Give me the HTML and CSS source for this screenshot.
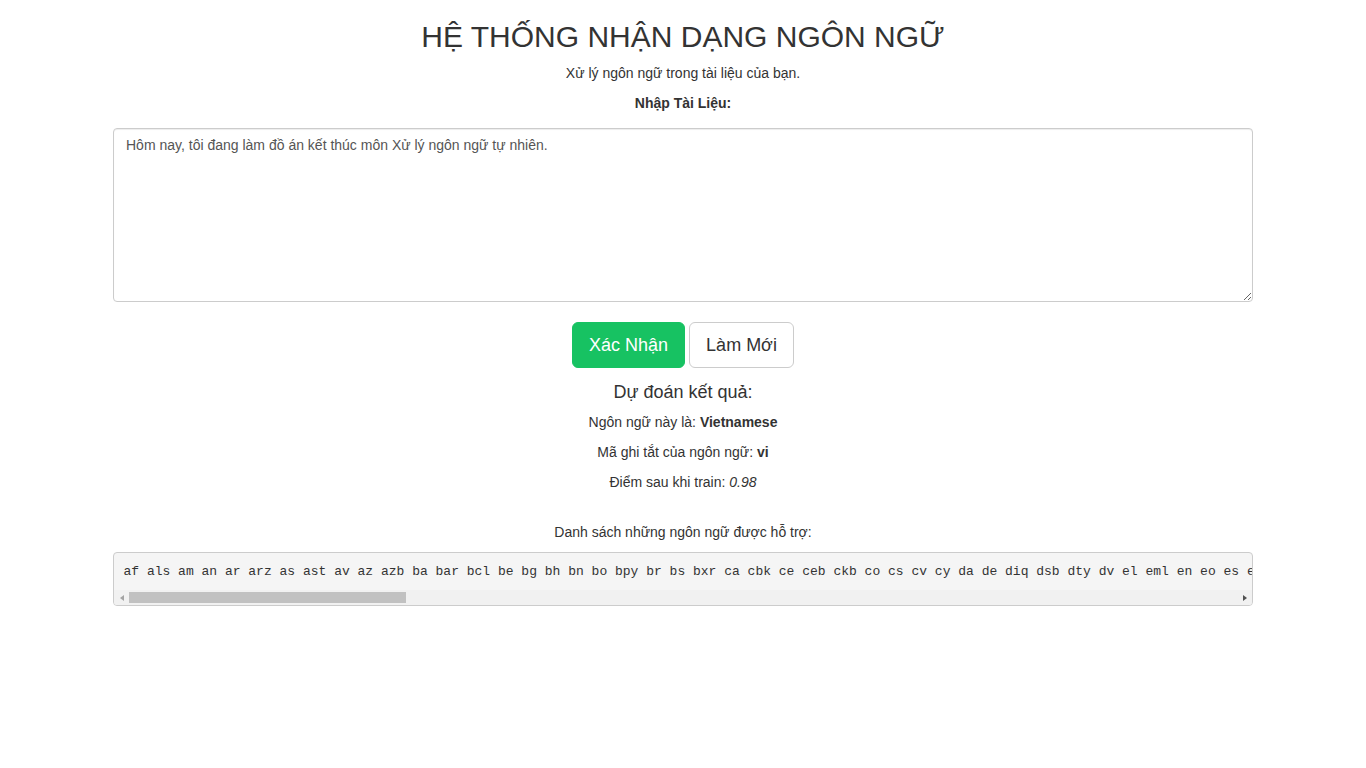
FILE: index.html
```html
<!DOCTYPE html>
<html lang="vi">
<head>
<meta charset="utf-8">
<title>Hệ thống nhận dạng ngôn ngữ</title>
<link rel="stylesheet" href="styles.css">
</head>
<body>
<div class="container">
  <h2 class="title">HỆ THỐNG NHẬN DẠNG NGÔN NGỮ</h2>
  <p class="center">Xử lý ngôn ngữ trong tài liệu của bạn.</p>
  <form class="form">
    <p class="center"><label class="label">Nhập Tài Liệu:</label></p>
    <textarea class="form-control" rows="8">Hôm nay, tôi đang làm đồ án kết thúc môn Xử lý ngôn ngữ tự nhiên.</textarea>
    <div class="actions">
      <button type="button" class="btn btn-success">Xác Nhận</button>
      <button type="button" class="btn btn-default">Làm Mới</button>
    </div>
  </form>
  <h4 class="result-title">Dự đoán kết quả:</h4>
  <p class="center">Ngôn ngữ này là: <b>Vietnamese</b></p>
  <p class="center">Mã ghi tắt của ngôn ngữ: <b>vi</b></p>
  <p class="center">Điểm sau khi train: <i>0.98</i></p>
  <p class="center list-title">Danh sách những ngôn ngữ được hỗ trợ:</p>
  <div class="langs-box">
    <pre class="langs">af als am an ar arz as ast av az azb ba bar bcl be bg bh bn bo bpy br bs bxr ca cbk ce ceb ckb co cs cv cy da de diq dsb dty dv el eml en eo es et eu fa fi fr frr fy ga gd gl gn gom gu gv he hi hif hr hsb ht hu hy ia id ie ilo io is it ja jbo jv ka kk km kn ko krc ku kv kw ky la lb lez li lmo lo lrc lt lv mai mg mhr min mk ml mn mr mrj ms mt mwl my myv mzn nah nap nds ne new nl nn no oc or os pa pam pfl pl pms pnb ps pt qu rm ro ru rue sa sah sc scn sco sd sh si sk sl so sq sr su sv sw ta te tg th tk tl tr tt tyv ug uk ur uz vec vep vi vls vo wa war wuu xal xmf yi yo yue zh</pre>
    <div class="hscroll">
      <span class="sb-btn"><span class="arrow arrow-left"></span></span>
      <div class="sb-track"><div class="sb-thumb" style="width: 277px"></div></div>
      <span class="sb-btn"><span class="arrow arrow-right"></span></span>
    </div>
  </div>
</div>
</body>
</html>
```
FILE: styles.css
```css
* { box-sizing: border-box; }
html, body { margin: 0; padding: 0; }
body {
  font-family: "Liberation Sans", Arial, sans-serif;
  font-size: 14px;
  line-height: 20px;
  color: #333;
  background: #fff;
}
.container {
  width: 1170px;
  margin: 0 auto;
  padding: 0 15px;
}
.title {
  margin: 20px 0 10px;
  font-size: 30px;
  font-weight: normal;
  line-height: 33px;
  text-align: center;
  color: #333;
}
.center { text-align: center; margin: 0 0 10px; }
.form { margin: 0; }
.label { font-weight: bold; display: inline-block; }
.form .center { margin-bottom: 15px; }
.form-control {
  display: block;
  width: 100%;
  height: 174px;
  padding: 6px 12px;
  font-family: "Liberation Sans", Arial, sans-serif;
  font-size: 14px;
  line-height: 20px;
  color: #555;
  background: #fff;
  border: 1px solid #ccc;
  border-radius: 4px;
  box-shadow: inset 0 1px 1px rgba(0,0,0,.075);
  resize: vertical;
  margin: 0;
}
.actions {
  display: flex;
  justify-content: center;
  gap: 4px;
  margin-top: 20px;
}
.btn {
  font-family: "Liberation Sans", Arial, sans-serif;
  font-size: 18px;
  line-height: 24px;
  padding: 10px 16px;
  border-radius: 6px;
  border: 1px solid transparent;
  cursor: pointer;
}
.btn-success { background: #17c262; border-color: #17c262; color: #fff; }
.btn-default { background: #fff; border-color: #ccc; color: #333; }
.result-title {
  margin: 14px 0 10px;
  font-size: 18px;
  font-weight: normal;
  line-height: 20px;
  text-align: center;
}
.list-title { margin-top: 30px; }
.langs-box {
  margin: 0 0 10px;
  background: #f5f5f5;
  border: 1px solid #ccc;
  border-radius: 4px;
  overflow: hidden;
}
.langs {
  display: block;
  margin: 0;
  padding: 9.5px 9.5px 9px;
  font-family: "Liberation Mono", "Courier New", monospace;
  font-size: 13px;
  line-height: 18.5px;
  color: #333;
  white-space: pre;
  overflow: hidden;
}
.hscroll {
  display: flex;
  height: 15px;
  background: #f1f1f1;
}
.sb-btn {
  flex: 0 0 15px;
  display: flex;
  align-items: center;
  justify-content: center;
}
.arrow {
  width: 0;
  height: 0;
  border-top: 3.5px solid transparent;
  border-bottom: 3.5px solid transparent;
}
.arrow-left { border-right: 4px solid #a3a3a3; }
.arrow-right { border-left: 4px solid #505050; }
.sb-track {
  flex: 1;
  padding: 2px 0;
}
.sb-thumb {
  height: 11px;
  background: #c1c1c1;
}
```
